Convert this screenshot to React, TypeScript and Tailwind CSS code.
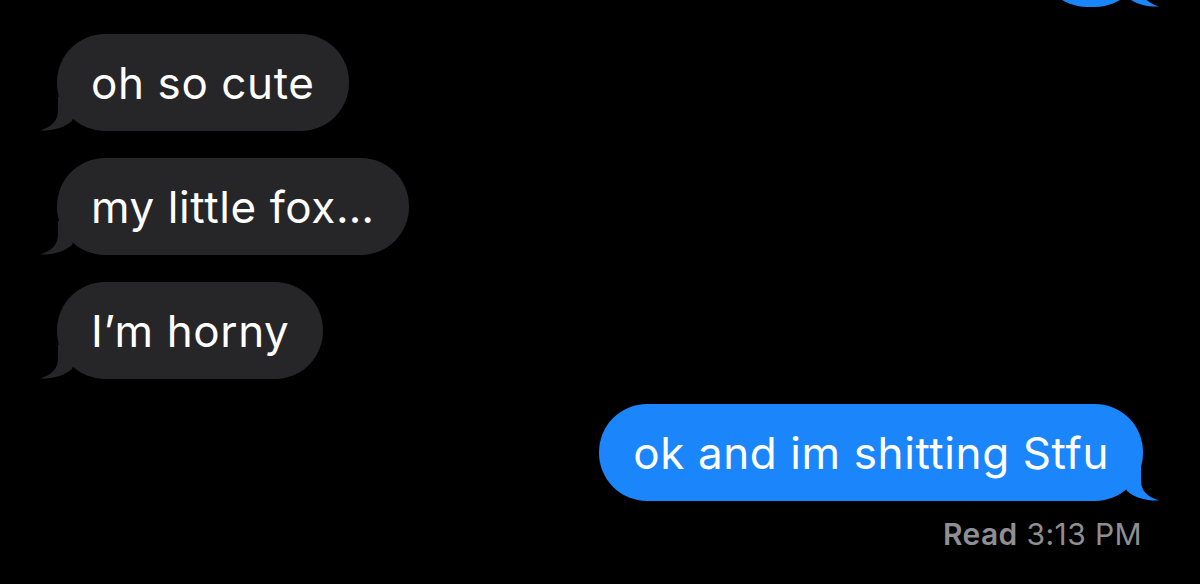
import React from 'react';

const GRAY = '#262628';
const BLUE = '#1b86fb';

// tail for received bubbles (bottom-left)
const LeftTail = () => (
  <svg className="absolute left-[-17px] bottom-0" width="40" height="34" viewBox="0 0 40 34">
    <path d="M18 0 L18 14 C18 24 11 30 0 33.5 C12 34 24 31 32 24 L40 0 Z" fill={GRAY} />
  </svg>
);

// tail for sent bubbles (bottom-right)
const RightTail = () => (
  <svg className="absolute right-[-16px] bottom-0" width="40" height="34" viewBox="0 0 40 34">
    <path d="M22 0 L22 14 C22 24 29 30 40 33.5 C28 34 16 31 8 24 L0 0 Z" fill={BLUE} />
  </svg>
);

const Received = ({ text }: { text: string }) => (
  <div className="relative self-start ml-[57px] h-[97px] rounded-[48px] bg-[#262628] px-[34px] flex items-center">
    <span className="text-white text-[44px] tracking-[0.6px] leading-none">{text}</span>
    <LeftTail />
  </div>
);

const Sent = ({ text, className = '' }: { text: string; className?: string }) => (
  <div className={`relative self-end mr-[57px] h-[97px] rounded-[48px] bg-[#1b86fb] px-[34px] flex items-center ${className}`}>
    <span className="text-white text-[44px] tracking-[0.6px] leading-none">{text}</span>
    <RightTail />
  </div>
);

export default function App() {
  return (
    <div
      className="w-[1200px] h-[584px] bg-black overflow-hidden flex flex-col"
      style={{ fontFamily: 'Inter, "Noto Sans", sans-serif' }}
    >
      <div className="relative self-end mr-[57px] -mt-[90px] h-[97px] w-[104px] rounded-[48px] bg-[#1b86fb] shrink-0">
        <RightTail />
      </div>
      <div className="flex flex-col gap-[27px] mt-[27px]">
        <Received text="oh so cute" />
        <Received text="my little fox…" />
        <Received text="I’m horny" />
      </div>
      <Sent text="ok and im shitting Stfu" className="mt-[25px]" />
      <div className="self-end mr-[58px] mt-[18px] text-[30px] tracking-[0.4px] text-[#8e8e93] leading-none">
        <span className="font-semibold">Read</span> 3:13 PM
      </div>
    </div>
  );
}
